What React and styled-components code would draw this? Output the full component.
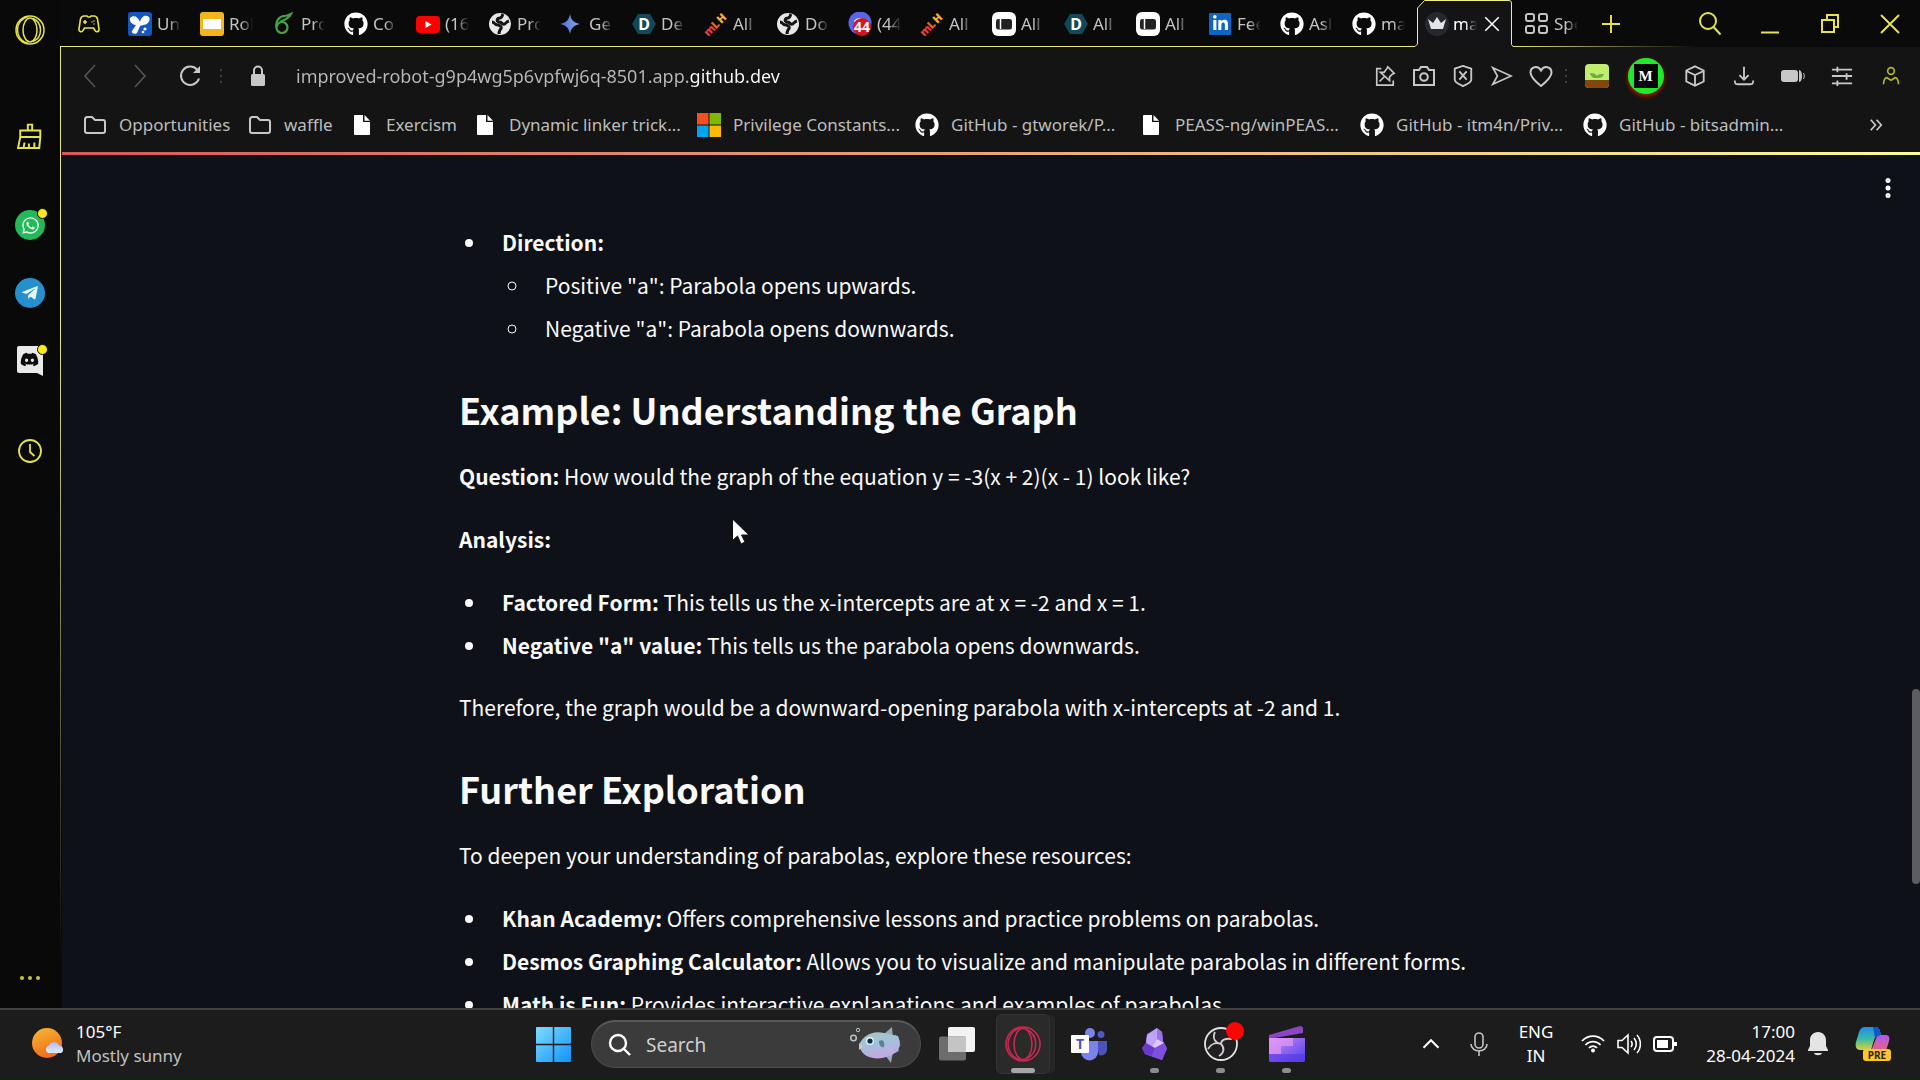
import React, { useState } from "react"
import styled, { createGlobalStyle } from "styled-components"
import {
	FaGithub,
	FaWhatsapp,
	FaTelegramPlane,
	FaDiscord,
	FaLinkedinIn,
} from "react-icons/fa"

const yellow = "#e6e34c"

const GlobalStyle = createGlobalStyle`
	* {
		box-sizing: border-box;
	}
	body {
		margin: 0;
		background: #0a0a0a;
		font-family: "Noto Sans", "Open Sans", sans-serif;
		overflow: hidden;
	}
	button {
		padding: 0;
		border: 0;
		background: none;
		color: inherit;
		font: inherit;
	}
	svg {
		display: block;
		flex: none;
	}
`

const Desktop = styled.div`
	display: flex;
	flex-direction: column;
	height: 100vh;
`
const BrowserWindow = styled.div`
	display: flex;
	flex: 1;
	min-height: 0;
`
const Main = styled.div`
	display: flex;
	flex-direction: column;
	flex: 1;
	min-width: 0;
`

/* SIDEBAR */
const Sidebar = styled.nav`
	display: flex;
	flex-direction: column;
	width: 60px;
	background: #090909;
`
const SideButton = styled.button`
	display: flex;
	align-items: center;
	justify-content: center;
	height: ${(p) => p.$height || 68}px;
	margin-top: ${(p) => p.$top || 0};
	color: ${yellow};
`
const Messenger = styled.span`
	position: relative;
	display: flex;
	align-items: center;
	justify-content: center;
	width: 30px;
	height: 30px;
	border-radius: 50%;
	background: ${(p) => p.$color};
	color: #e8fbf0;
`
const Unread = styled.span`
	position: absolute;
	top: -2px;
	right: -3px;
	width: 11px;
	height: 11px;
	border: 1px solid #090909;
	border-radius: 50%;
	background: #fbe818;
`

/* TABS */
const TabBar = styled.div`
	position: relative;
	display: flex;
	align-items: center;
	height: 47px;
	padding-left: 17px;
	background: #0a0a0a;
	&::after {
		content: "";
		position: absolute;
		left: 0;
		right: 0;
		bottom: 0;
		height: 1px;
		background: linear-gradient(90deg, #e8e58a 78%, #0a0a0a 88%);
	}
`
const GamepadTab = styled.button`
	width: 51px;
	flex: none;
`
const Tab = styled.button`
	display: flex;
	align-items: center;
	gap: 5px;
	width: 72px;
	height: 47px;
	color: #c4c4c4;
`
const TabLabel = styled.span`
	width: 24px;
	overflow: hidden;
	white-space: nowrap;
	text-align: left;
	font-size: 17px;
	line-height: 24px;
	mask-image: linear-gradient(90deg, #000 50%, transparent 100%);
`
const ActiveTab = styled.div`
	position: relative;
	z-index: 1;
	display: flex;
	align-items: center;
	width: 98px;
	height: 47px;
	margin-left: -9px;
	margin-right: 12px;
	padding-left: 10px;
	color: #fff;
`
const TabOutline = styled.svg`
	position: absolute;
	left: 0;
	top: 0;
`
const ActiveTabButton = styled.button`
	position: relative;
	display: flex;
	align-items: center;
	gap: 4px;
	margin-right: 6px;
`
const CloseTab = styled.button`
	position: relative;
`
const NewTab = styled.button`
	margin-left: 5px;
	color: ${yellow};
`
const WindowControls = styled.div`
	display: flex;
	margin-left: auto;
	color: ${yellow};
`
const WindowButton = styled.button`
	display: flex;
	align-items: center;
	justify-content: center;
	width: 60px;
	height: 46px;
	color: inherit;
`

/* TOOLBARS */
const Panel = styled.div`
	display: flex;
	flex-direction: column;
	flex: 1;
	min-height: 0;
	padding-left: 1px;
	background: linear-gradient(#e8e58a, #e8e58a 30%, #0a0a0a 95%);
`
const AddressBar = styled.form`
	display: flex;
	align-items: center;
	height: 58px;
	padding: 0 5px 0 4px;
	background: #141414;
	color: #c8c8c8;
`
const ToolButton = styled.button`
	display: flex;
	align-items: center;
	justify-content: center;
	width: ${(p) => p.$width}px;
	height: 40px;
	color: ${(p) => p.$color || "inherit"};
`
const UrlInput = styled.input`
	flex: 1;
	min-width: 0;
	margin-left: 8px;
	padding: 0;
	border: 0;
	outline: 0;
	font-family: inherit;
	font-size: 18px;
	line-height: 24px;
	background: linear-gradient(90deg, #b9b9b9 ${(p) => p.$split}px, #fff ${(p) => p.$split}px);
	background-clip: text;
	color: transparent;
`
const Medal = styled.span`
	display: flex;
	align-items: center;
	justify-content: center;
	width: 36px;
	height: 36px;
	border-radius: 50%;
	background: #1dea2b;
	box-shadow: 0 2px 4px #c81400;
	span {
		width: 24px;
		height: 24px;
		background: #060606;
		color: #fff;
		font: 700 15px/24px "Liberation Serif", serif;
	}
`
const Bookmarks = styled.div`
	display: flex;
	align-items: center;
	gap: 20px;
	height: 47px;
	padding: 0 37px 7px 22px;
	background: #141414;
`
const Bookmark = styled.a`
	display: flex;
	align-items: center;
	gap: 12px;
	color: #bdbdbd;
	text-decoration: none;
	font-size: 17px;
	line-height: 24px;
`
const BookmarkIcon = styled.span`
	display: flex;
	justify-content: center;
	width: 24px;
	color: #fff;
`
const BookmarkLabel = styled.span`
	width: ${(p) => p.$width}px;
	white-space: nowrap;
`
const MoreBookmarks = styled.button`
	margin-left: auto;
	color: #c8c8c8;
`

/* PAGE */
const Page = styled.main`
	position: relative;
	flex: 1;
	min-height: 0;
	padding-top: 71px;
	padding-right: 8px;
	overflow: hidden;
	border-left: 1px solid #0a0a0a;
	background: #0e1117;
	color: #fafafa;
	font-family: "Noto Sans CJK SC", "Noto Sans", sans-serif;
	font-size: 21px;
	line-height: 38px;
`
const ProgressLine = styled.div`
	position: absolute;
	left: 0;
	right: 0;
	top: 0;
	height: 3px;
	background: linear-gradient(90deg, #d9575c, #e9a67d 50%, #fcfc9a);
`
const PageMenu = styled.button`
	position: absolute;
	right: 20px;
	top: 24px;
	width: 24px;
`
const Scrollbar = styled.div`
	position: absolute;
	right: 0;
	top: 537px;
	width: 8px;
	height: 195px;
	border-radius: 4px;
	background: #5b5d61;
`
const Article = styled.article`
	max-width: 1056px;
	margin: 0 auto;
	h2 {
		margin: 36px 0 22px;
		font-size: 36px;
		line-height: 52px;
		font-weight: 700;
	}
	p {
		margin: 0 0 25px;
	}
	strong {
		font-weight: 700;
	}
`
const List = styled.ul`
	margin: 0 0 24px;
	padding: 0;
	list-style: ${(p) => (p.$nested ? "circle" : "disc")};
	li {
		margin: 0 0 0 29px;
		padding-left: 14px;
	}
	li + li {
		margin-top: 5px;
	}
	& & {
		margin: 5px 0 0;
	}
`
const Cursor = styled.svg`
	position: absolute;
	left: 731px;
	top: 518px;
`

/* TASKBAR */
const Taskbar = styled.footer`
	display: flex;
	height: 72px;
	border-top: 2px solid #404040;
	border-bottom: 2px solid #0f2411;
	background: #1c1c1c;
	color: #fff;
	font-size: 17px;
	line-height: 24px;
`
const Weather = styled.button`
	display: flex;
	flex: 491 1 0;
	align-items: center;
	gap: 11px;
	padding-left: 32px;
	text-align: left;
`
const Muted = styled.span`
	color: #c0c0c0;
`
const Stack = styled.span`
	display: flex;
	flex-direction: column;
`
const StartButton = styled.button`
	display: flex;
	align-items: center;
	justify-content: center;
	width: 60px;
`
const SearchBox = styled.label`
	display: flex;
	align-items: center;
	align-self: center;
	width: 330px;
	height: 48px;
	margin: 0 3px 0 8px;
	padding: 0 18px 0 16px;
	border: 1px solid #4c4c4c;
	border-top: 2px solid #5a5a5a;
	border-radius: 24px;
	background: #3b3b3b;
`
const SearchInput = styled.input`
	flex: 1;
	min-width: 0;
	margin-left: 14px;
	padding: 0;
	border: 0;
	outline: 0;
	background: none;
	color: #fff;
	font-family: inherit;
	font-size: 19px;
	line-height: 24px;
	&::placeholder {
		color: #cfcfcf;
		opacity: 1;
	}
`
const AppButton = styled.button`
	position: relative;
	display: flex;
	align-items: center;
	justify-content: center;
	width: 66px;
`
const ActiveTile = styled.span`
	display: flex;
	align-items: center;
	justify-content: center;
	width: 54px;
	height: 60px;
	border: 1px solid #353535;
	border-radius: 6px;
	background: #2a2a2a;
	box-shadow: 6px 0 0 -1px #262626;
`
const Running = styled.span`
	position: absolute;
	bottom: 5px;
	left: 50%;
	width: ${(p) => (p.$focused ? 24 : 9)}px;
	height: 5px;
	margin-left: ${(p) => (p.$focused ? -12 : -5)}px;
	border-radius: 3px;
	background: ${(p) => (p.$focused ? "#a6a6a6" : "#8c8c8c")};
`
const RecordDot = styled.span`
	position: absolute;
	left: 38px;
	top: 12px;
	width: 18px;
	height: 18px;
	border-radius: 50%;
	background: #fb0505;
`
const Tray = styled.div`
	display: flex;
	flex: 588 1 0;
	align-items: center;
	justify-content: flex-end;
	padding-right: 12px;
`
const TraySlot = styled.button`
	display: flex;
	flex: none;
	flex-direction: column;
	align-items: ${(p) => (p.$end ? "flex-end" : "center")};
	justify-content: center;
	width: ${(p) => p.$width}px;
	height: 60px;
	padding-right: ${(p) => (p.$end ? 3 : 0)}px;
	white-space: nowrap;
`

// shared wrapper for stroked icons
const Line = ({ size = 24, width = 2, children, ...rest }) => (
	<svg
		width={size}
		height={size}
		viewBox="0 0 24 24"
		fill="none"
		stroke="currentColor"
		strokeWidth={width}
		{...rest}
	>
		{children}
	</svg>
)

/* FAVICONS */
const Unstop = () => (
	<svg width="24" height="24" viewBox="0 0 24 24">
		<rect width="24" height="24" rx="3" fill="#1556c0" />
		<path
			d="M2 6c3-3 8-2 10 4 1-5 5-8 9-5 2 3-1 8-6 8l-3 1-3 7c-2 2-6 0-5-2l4-6C4 13 1 9 2 6z"
			fill="#fff"
		/>
		<circle cx="17" cy="17" r="1.6" fill="#fff" />
		<circle cx="15" cy="20" r="1.3" fill="#fff" />
	</svg>
)
const Slides = () => (
	<svg width="24" height="24" viewBox="0 0 24 24">
		<rect width="24" height="24" rx="3" fill="#f4b51c" />
		<rect x="3" y="7" width="18" height="10" fill="#fff" />
	</svg>
)
const Overleaf = () => (
	<svg width="24" height="24" viewBox="0 0 24 24" fill="none" stroke="#46a247" strokeWidth="2.2">
		<circle cx="10" cy="15.5" r="5.5" />
		<path d="M4.500 15C3 9 8 4 12 4c3 0 5-1 7-2-2 4-6 6-11 8" />
	</svg>
)
const Youtube = () => (
	<svg width="24" height="24" viewBox="0 0 24 24">
		<rect y="4" width="24" height="17" rx="4" fill="#f00" />
		<path d="M9.500 9v7l6-3.500z" fill="#fff" />
	</svg>
)
const Globe = () => (
	<svg width="24" height="24" viewBox="0 0 24 24">
		<circle cx="12" cy="12" r="11" fill="#e8e8e8" />
		<path
			d="M4 10c3 0 2 3 6 3 4 1 4 3 2 5-1 2-1 3-1 4M21 9c-4 1-3 4-6 3-2-1-1-2-4-2-3-1-2-4 1-4 2 0 2-2 3-4"
			fill="none"
			stroke="#151515"
			strokeWidth="3"
		/>
	</svg>
)
const Gemini = () => (
	<svg width="24" height="24" viewBox="0 0 24 24">
		<defs>
			<linearGradient id="gem" x1="0" x2="1">
				<stop offset="0" stopColor="#3f6ee0" />
				<stop offset="1" stopColor="#8fa8e6" />
			</linearGradient>
		</defs>
		<path d="M10 2c1 6 4 9 10 10-6 1-9 4-10 10-1-6-4-9-10-10 6-1 9-4 10-10z" fill="url(#gem)" />
	</svg>
)
const Devfolio = () => (
	<svg width="24" height="24" viewBox="0 0 24 24">
		<path d="M6 2h12l6 10-6 10H6L0 12z" fill="#10495a" />
		<text x="12" y="18" textAnchor="middle" fontSize="16" fontWeight="700" fill="#fff">
			D
		</text>
	</svg>
)
const Mlh = () => (
	<svg width="24" height="24" viewBox="0 0 24 24">
		<g fontSize="11" fontWeight="900" textAnchor="middle">
			<text x="6" y="22" fill="#e0403c" transform="rotate(-45 6 19)">m</text>
			<text x="12" y="16" fill="#e0653c" transform="rotate(-45 12 13)">L</text>
			<text x="18" y="10" fill="#f3b632" transform="rotate(-45 18 7)">H</text>
		</g>
	</svg>
)
const Mail = () => (
	<svg width="24" height="24" viewBox="0 0 24 24">
		<circle cx="12" cy="11" r="11.500" fill="#5865e8" />
		<path d="M6 9c3-4 9-4 12 0l-2 3H8z" fill="#fff" />
		<circle cx="14" cy="15" r="9" fill="#d3181d" />
		<text x="14" y="20" textAnchor="middle" fontSize="14" fontWeight="700" fill="#fff">
			44
		</text>
	</svg>
)
const Notebook = () => (
	<svg width="24" height="24" viewBox="0 0 24 24">
		<rect width="24" height="24" rx="6" fill="#fff" />
		<rect x="4" y="7" width="16" height="10.500" rx="2.500" fill="#222" />
		<path d="M8.500 7v10" stroke="#fff" strokeWidth="1.500" />
	</svg>
)
const Linkedin = () => (
	<svg width="24" height="24" viewBox="0 0 24 24">
		<rect x="1" y="1" width="22" height="22" rx="1" fill="#0f66c2" />
		<FaLinkedinIn x="4" y="3" size={17} color="#fff" />
	</svg>
)
const Github = () => <FaGithub size={24} color="#fff" />
const Crown = () => (
	<svg width="24" height="24" viewBox="0 0 24 24">
		<circle cx="12" cy="12" r="12" fill="#252731" />
		<path d="M3 7l5 4 4-6 4 6 5-4-3 10H6z" fill="#e4e4e8" />
	</svg>
)
const SpeedDial = () => (
	<Line>
		<rect x="1" y="2" width="8" height="7" rx="2" />
		<rect x="14" y="2" width="8" height="7" rx="2" />
		<rect x="1" y="14" width="8" height="7" rx="2" />
		<rect x="14" y="14" width="8" height="7" rx="2" />
	</Line>
)
const Gamepad = () => (
	<Line color={yellow} width={1.6}>
		<path d="M7 4h3l1 1h2l1-1h3c2 0 3 1 3.500 3L22 17c.5 3-3 3.500-4 1.500L16.500 16h-9L6 18.500C5 20.500 1.500 20 2 17L3.500 7C4 5 5 4 7 4z" />
		<path d="M8 8v4M6 10h4M14.500 10h1M17 8.500v1M16.500 12h1" />
	</Line>
)

/* BOOKMARK ICONS */
const Folder = () => (
	<Line width={2} color="#c8c8c8">
		<path d="M2 18V6.500C2 5 3 4 4.500 4H9l3 3h8c1.200 0 2 1 2 2v9c0 1.200-1 2-2 2H4c-1.200 0-2-1-2-2z" />
	</Line>
)
const Doc = () => (
	<svg width="16" height="20" viewBox="0 0 16 20" fill="#fff">
		<path d="M1 0h8v7h7v12a1 1 0 0 1-1 1H1a1 1 0 0 1-1-1V1a1 1 0 0 1 1-1z" />
		<path d="M10.500 0L16 5.700h-5.500z" />
	</svg>
)
const Microsoft = () => (
	<svg width="24" height="24" viewBox="0 0 24 24">
		<path d="M0 0h11.500v11.500H0z" fill="#f25022" />
		<path d="M12.500 0H24v11.500H12.500z" fill="#7fba00" />
		<path d="M0 12.500h11.500V24H0z" fill="#00a4ef" />
		<path d="M12.500 12.500H24V24H12.500z" fill="#ffb900" />
	</svg>
)
const Dots = () => (
	<svg width="12" height="16" viewBox="0 0 12 16" fill="#3d3d3d">
		<rect x="5" y="1" width="2" height="2" />
		<rect x="5" y="7" width="2" height="2" />
		<rect x="5" y="13" width="2" height="2" />
	</svg>
)

const tabs = [
	["Un", Unstop],
	["Rol", Slides],
	["Pro", Overleaf],
	["Co", Github],
	["(16", Youtube],
	["Pro", Globe],
	["Ge", Gemini],
	["De", Devfolio],
	["All", Mlh],
	["Do", Globe],
	["(44", Mail],
	["All", Mlh],
	["All", Notebook],
	["All", Devfolio],
	["All", Notebook],
	["Fee", Linkedin],
	["Asl", Github],
	["ma", Github],
]

const bookmarks = [
	["Opportunities", Folder, 109],
	["waffle", Folder, 46],
	["Exercism", Doc, 67],
	["Dynamic linker trick...", Doc, 168],
	["Privilege Constants...", Microsoft, 162],
	["GitHub - gtworek/P...", Github, 168],
	["PEASS-ng/winPEAS...", Doc, 165],
	["GitHub - itm4n/Priv...", Github, 167],
	["GitHub - bitsadmin...", Github, 167],
]

function TabStrip() {
	return (
		<TabBar>
			<GamepadTab aria-label="GX Corner">
				<Gamepad />
			</GamepadTab>
			{tabs.map(([label, Icon], i) => (
				<Tab key={i}>
					<Icon />
					<TabLabel>{label}</TabLabel>
				</Tab>
			))}
			<ActiveTab>
				<TabOutline width="98" height="47" viewBox="0 0 98 47">
					<path d="M0 47V46L2 44V8L9 .5H94Q96.500.5 96.500 3V44L98 46.500V47Z" fill="#141417" />
					<path
						d="M0 46.500L2.500 44V8L9.500 .5H94Q96.500 .5 96.500 3V44.500L98 46.500"
						fill="none"
						stroke="#f0ed8c"
					/>
				</TabOutline>
				<ActiveTabButton>
					<Crown />
					<TabLabel>ma</TabLabel>
				</ActiveTabButton>
				<CloseTab aria-label="Close tab">
					<Line size={18} width={2}>
						<path d="M3 3l18 18M21 3L3 21" />
					</Line>
				</CloseTab>
			</ActiveTab>
			<Tab>
				<SpeedDial />
				<TabLabel>Spe</TabLabel>
			</Tab>
			<NewTab aria-label="New tab">
				<Line size={18} width={2.6}>
					<path d="M12 0v24M0 12h24" />
				</Line>
			</NewTab>
			<WindowControls>
				<WindowButton aria-label="Search tabs">
					<Line width={2}>
						<circle cx="10" cy="9" r="8" />
						<path d="M15.500 15l7 7.500" />
					</Line>
				</WindowButton>
				<WindowButton aria-label="Minimise">
					<Line>
						<path d="M3 20.500h18" />
					</Line>
				</WindowButton>
				<WindowButton aria-label="Restore">
					<Line width={2}>
						<path d="M4 8h12v12H4zM9 8V3h11v12h-4" />
					</Line>
				</WindowButton>
				<WindowButton aria-label="Close">
					<Line>
						<path d="M3 3l18 18M21 3L3 21" />
					</Line>
				</WindowButton>
			</WindowControls>
		</TabBar>
	)
}

function Toolbar() {
	const [url, setUrl] = useState("improved-robot-g9p4wg5p6vpfwj6q-8501.app.github.dev")
	return (
		<AddressBar onSubmit={(e) => e.preventDefault()}>
			<ToolButton type="button" $width={50} $color="#555" aria-label="Back">
				<Line width={1.6}>
					<path d="M17 1L7 12l10 11" />
				</Line>
			</ToolButton>
			<ToolButton type="button" $width={50} $color="#555" aria-label="Forward">
				<Line width={1.6}>
					<path d="M7 1l10 11L7 23" />
				</Line>
			</ToolButton>
			<ToolButton type="button" $width={50} aria-label="Reload">
				<Line width={2}>
					<path d="M21 14.500A9.200 9.200 0 1 1 19 5.500" />
					<path d="M22 2v7h-7z" fill="currentColor" stroke="none" />
				</Line>
			</ToolButton>
			<Dots />
			<ToolButton type="button" $width={61} aria-label="Site information">
				<svg width="16" height="22" viewBox="0 0 16 22" fill="#c8c8c8">
					<rect x="1" y="9" width="14" height="12" rx="1.500" />
					<path d="M4 9V5.500a4 4 0 0 1 8 0V9" fill="none" stroke="#c8c8c8" strokeWidth="2" />
				</svg>
			</ToolButton>
			<UrlInput
				aria-label="Address"
				spellCheck="false"
				$split={393}
				value={url}
				onChange={(e) => setUrl(e.target.value)}
			/>
			<ToolButton type="button" $width={39} aria-label="Pin page">
				<Line size={22} width={1.8}>
					<path d="M8 4H3v18h18v-5" />
					<path d="M15 2l7 7-2 1-3 3v4L7 8h4l3-4zM12 12l-6 6" />
				</Line>
			</ToolButton>
			<ToolButton type="button" $width={39} aria-label="Snapshot">
				<Line>
					<path d="M2 6h5l2-3h6l2 3h5v15H2z" />
					<circle cx="12" cy="13" r="3.800" />
				</Line>
			</ToolButton>
			<ToolButton type="button" $width={39} aria-label="Ad blocker">
				<Line size={22} width={2}>
					<path d="M3 4l9-3 9 3v12c0 3-5 5-9 7-4-2-9-4-9-7z" />
					<path d="M8 7l8 9M16 7l-8 9" />
				</Line>
			</ToolButton>
			<ToolButton type="button" $width={39} aria-label="Send to Flow">
				<Line size={22} width={1.8}>
					<path d="M2 3l20 9-20 9 5-9z" />
				</Line>
			</ToolButton>
			<ToolButton type="button" $width={39} aria-label="Save to favourites">
				<Line width={2}>
					<path d="M12 22C7 18 1.500 13.500 1.500 8.500 1.500 2.500 9 1 12 6.500 15 1 22.500 2.500 22.500 8.500c0 5-5.500 9.500-10.500 13.500z" />
				</Line>
			</ToolButton>
			<Dots />
			<ToolButton type="button" $width={49} aria-label="Plant extension">
				<svg width="24" height="24" viewBox="0 0 24 24">
					<rect width="24" height="24" rx="4" fill="#c2ee70" />
					<path d="M0 16h24v4a4 4 0 0 1-4 4H4a4 4 0 0 1-4-4z" fill="#82470f" />
					<path d="M5 9c4 0 6 1 7 3 1-2 3-2 7-2-1 3-3 4-6 4h-2c-4 0-5-2-6-5z" fill="#6cae3c" />
				</svg>
			</ToolButton>
			<ToolButton type="button" $width={49} aria-label="M extension">
				<Medal>
					<span>M</span>
				</Medal>
			</ToolButton>
			<ToolButton type="button" $width={49} aria-label="Extensions">
				<Line size={22} width={2}>
					<path d="M12 1.500l9.500 4.500v12L12 22.500 2.500 18V6zM2.500 6.500L12 11l9.500-4.500M12 11v11" />
				</Line>
			</ToolButton>
			<ToolButton type="button" $width={49} aria-label="Downloads">
				<Line size={22} width={2}>
					<path d="M12 2v13M7 11l5 5 5-5M2 17c0 4 1 4 4 4h12c3 0 4 0 4-4" />
				</Line>
			</ToolButton>
			<ToolButton type="button" $width={49} aria-label="Battery saver">
				<svg width="24" height="14" viewBox="0 0 24 14" fill="#c8c8c8">
					<rect y="1" width="17" height="12" rx="3" />
					<path d="M18 1c4 0 4 12 0 12z" />
					<path d="M22.500 4c1 2 1 4 0 6" stroke="#c8c8c8" fill="none" />
				</svg>
			</ToolButton>
			<ToolButton type="button" $width={49} aria-label="Easy setup">
				<Line size={22} width={2}>
					<path d="M1 5h22M1 12h22M1 20h22M7 2v6M17 9v7M7 17v6" />
				</Line>
			</ToolButton>
			<ToolButton type="button" $width={49} $color="#b5b32a" aria-label="Profile">
				<Line size={20}>
					<circle cx="12" cy="6" r="4" />
					<path d="M3 22c0-5 2-8 4-8l5 3 5-3c2 0 4 3 4 8" />
				</Line>
			</ToolButton>
		</AddressBar>
	)
}

function BookmarkBar() {
	return (
		<Bookmarks>
			{bookmarks.map(([label, Icon, width]) => (
				<Bookmark href="#" key={label}>
					<BookmarkIcon>
						<Icon />
					</BookmarkIcon>
					<BookmarkLabel $width={width}>{label}</BookmarkLabel>
				</Bookmark>
			))}
			<MoreBookmarks aria-label="More bookmarks">
				<Line size={14} width={3}>
					<path d="M3 3l8 9-8 9M13 3l8 9-8 9" />
				</Line>
			</MoreBookmarks>
		</Bookmarks>
	)
}

function Content() {
	return (
		<Page>
			<ProgressLine />
			<PageMenu aria-label="Main menu">
				<svg width="24" height="24" viewBox="0 0 24 24" fill="#fff">
					<circle cx="12" cy="4.500" r="2.500" />
					<circle cx="12" cy="12" r="2.500" />
					<circle cx="12" cy="19.500" r="2.500" />
				</svg>
			</PageMenu>
			<Article>
				<List>
					<li>
						<strong>Direction:</strong>
						<List $nested>
							<li>Positive "a": Parabola opens upwards.</li>
							<li>Negative "a": Parabola opens downwards.</li>
						</List>
					</li>
				</List>
				<h2>Example: Understanding the Graph</h2>
				<p>
					<strong>Question:</strong> How would the graph of the equation y = -3(x + 2)(x - 1) look
					like?
				</p>
				<p>
					<strong>Analysis:</strong>
				</p>
				<List>
					<li>
						<strong>Factored Form:</strong> This tells us the x-intercepts are at x = -2 and x = 1.
					</li>
					<li>
						<strong>Negative "a" value:</strong> This tells us the parabola opens downwards.
					</li>
				</List>
				<p>
					Therefore, the graph would be a downward-opening parabola with x-intercepts at -2 and 1.
				</p>
				<h2>Further Exploration</h2>
				<p>To deepen your understanding of parabolas, explore these resources:</p>
				<List>
					<li>
						<strong>Khan Academy:</strong> Offers comprehensive lessons and practice problems on
						parabolas.
					</li>
					<li>
						<strong>Desmos Graphing Calculator:</strong> Allows you to visualize and manipulate
						parabolas in different forms.
					</li>
					<li>
						<strong>Math is Fun:</strong> Provides interactive explanations and examples of
						parabolas.
					</li>
				</List>
			</Article>
			<Scrollbar />
		</Page>
	)
}

function SideNav() {
	return (
		<Sidebar>
			<SideButton $height={60} aria-label="Opera menu">
				<svg width="30" height="30" viewBox="0 0 30 30" fill="none" stroke={yellow} strokeWidth="1.500">
					<circle cx="15" cy="15" r="14" />
					<ellipse cx="15" cy="15" rx="7" ry="12" />
					<path d="M13 1.500C-1 6-1 24 13 28.500M18 3.500c10 4 10 19 0 23" />
				</svg>
			</SideButton>
			<SideButton $top="42px" aria-label="Cleaner">
				<Line size={26} width={1.8}>
					<path d="M10 7V1.500h4V7M3 7h18.500v6H3zM3 13L1 23h19.500l1-10M6 23l1-5M11 23v-4M16 23v-5" />
				</Line>
			</SideButton>
			<SideButton $top="21px" aria-label="WhatsApp">
				<Messenger $color="#25b858">
					<FaWhatsapp size={19} />
					<Unread />
				</Messenger>
			</SideButton>
			<SideButton aria-label="Telegram">
				<Messenger $color="#2590cc">
					<FaTelegramPlane size={18} />
				</Messenger>
			</SideButton>
			<SideButton aria-label="Discord">
				<Messenger $color="transparent">
					<svg width="28" height="30" viewBox="0 0 28 30">
						<path d="M3 0h22a2 2 0 0 1 2 2v28l-6-3H3a2 2 0 0 1-2-2V2a2 2 0 0 1 2-2z" fill="#e9e9e9" />
						<FaDiscord x="4" y="4" size={19} color="#0c0c0c" />
					</svg>
					<Unread />
				</Messenger>
			</SideButton>
			<SideButton $top="22px" aria-label="History">
				<Line width={1.8}>
					<circle cx="12" cy="12" r="11" />
					<path d="M12 5v8l4.500 4" />
				</Line>
			</SideButton>
			<SideButton $top="auto" $height={60} aria-label="Sidebar setup">
				<svg width="22" height="6" viewBox="0 0 22 6" fill="#c5c33a">
					<circle cx="3" cy="3" r="2" />
					<circle cx="11" cy="3" r="2" />
					<circle cx="19" cy="3" r="2" />
				</svg>
			</SideButton>
		</Sidebar>
	)
}

/* TASKBAR ICONS */
const Sun = () => (
	<svg width="33" height="32" viewBox="0 0 33 32">
		<defs>
			<linearGradient id="sun" x1="0" y1="0" x2=".4" y2="1">
				<stop offset="0" stopColor="#f9b934" />
				<stop offset="1" stopColor="#ee6f1b" />
			</linearGradient>
			<linearGradient id="cloud" x1="0" y1="0" x2="0" y2="1">
				<stop offset="0" stopColor="#a9c2f5" />
				<stop offset="1" stopColor="#e3e8f6" />
			</linearGradient>
		</defs>
		<circle cx="15" cy="15" r="15" fill="url(#sun)" />
		<path d="M16 25a4 4 0 0 1 1-7.500 5.500 5.500 0 0 1 10 0A4 4 0 0 1 29 25z" fill="url(#cloud)" />
	</svg>
)
const WindowsLogo = () => (
	<svg width="35" height="35" viewBox="0 0 35 35">
		<defs>
			<linearGradient id="win" gradientUnits="userSpaceOnUse" x1="0" y1="0" x2="35" y2="35">
				<stop offset="0" stopColor="#7fdcff" />
				<stop offset="1" stopColor="#0f93fb" />
			</linearGradient>
		</defs>
		<path
			d="M1 0h15.800v16.800H0V1a1 1 0 0 1 1-1zM18.200 0H34a1 1 0 0 1 1 1v15.800H18.200zM0 18.200h16.800V35H1a1 1 0 0 1-1-1zM18.200 18.200H35V34a1 1 0 0 1-1 1H18.200z"
			fill="url(#win)"
		/>
	</svg>
)
const Fish = () => (
	<svg width="52" height="38" viewBox="0 0 52 38">
		<defs>
			<linearGradient id="fish" x1="0" y1="0" x2=".3" y2="1">
				<stop offset="0" stopColor="#a8c8b9" />
				<stop offset=".55" stopColor="#a4bfe0" />
				<stop offset="1" stopColor="#c4a8e0" />
			</linearGradient>
		</defs>
		<path d="M34 8l8-7 1 12zM35 29l6 8 2-11z" fill="#93aabd" />
		<path d="M46 10c2 2 2 3 4 5-1 2 1 3 0 5s-2 2-1 5l-4 2V8z" fill="#8d9ddd" />
		<path d="M9 19c4-10 14-15 25-12l14 3c2 4 2 9 0 14-8 10-33 13-38-2z" fill="url(#fish)" />
		<path d="M9 17l4 4-4 3z" fill="#d8c4bb" />
		<circle cx="20" cy="15" r="4" fill="#e9f3f4" />
		<circle cx="20" cy="15" r="2.600" fill="#0e2c4d" />
		<path d="M29 15c4-2 6 1 5 6-3 1-5-2-5-6z" fill="#5c8291" />
		<circle cx="3.500" cy="12" r="2.800" fill="none" stroke="#b9c4c8" strokeWidth="1.500" />
		<circle cx="8" cy="4" r="1.700" fill="none" stroke="#b9c4c8" />
	</svg>
)
const TaskView = () => (
	<svg width="36" height="34" viewBox="0 0 36 34">
		<rect x="9" width="27" height="25" rx="2" fill="#f3f3f3" />
		<rect y="9.500" width="27" height="24" rx="2" fill="#6c6c6c" />
		<path d="M9 9.500h18V25H9z" fill="#c4c4c4" />
	</svg>
)
const OperaGx = () => (
	<svg width="36" height="36" viewBox="0 0 36 36" fill="none" stroke="#c92850" strokeWidth="1.600">
		<circle cx="18" cy="18" r="17" />
		<ellipse cx="18" cy="18" rx="9" ry="15.500" />
		<path d="M15 2C-1 7-1 29 15 34M21 3c13 6 13 24 0 30" />
	</svg>
)
const Teams = () => (
	<svg width="36" height="34" viewBox="0 0 36 34">
		<circle cx="30" cy="7.500" r="3.500" fill="#5059c9" />
		<path d="M25 14h11v9a6 6 0 0 1-8 5z" fill="#4b53bc" />
		<circle cx="19" cy="6" r="5" fill="#7b83eb" />
		<path d="M10 14h17v11a8.500 8.500 0 0 1-17 0z" fill="#7b83eb" />
		<rect y="8" width="18" height="18" rx="1" fill="#fff" />
		<text x="9" y="22" textAnchor="middle" fontSize="14" fontWeight="700" fill="#4b53bc">
			T
		</text>
	</svg>
)
const Obsidian = () => (
	<svg width="26" height="34" viewBox="0 0 26 34">
		<path d="M15 1l5 4 1 9 4 7-5 12-9-3-8-3-3-6 4-5 1-9z" fill="#8b5fe8" />
		<path d="M15 1L5 8 4 16l6 4 5-8z" fill="#c0a3fa" />
		<path d="M15 1l5 4 1 10-6-3z" fill="#9873ee" />
		<path d="M15 12l-5 8 3 1 9-5z" fill="#dccdfd" />
		<path d="M4 16l-4 5 3 6 7 2 3-8z" fill="#6a38cc" />
		<path d="M13 21l-3 8 10 4 5-11-3-6z" fill="#7c4fe0" />
	</svg>
)
const Obs = () => (
	<svg width="36" height="36" viewBox="0 0 36 36">
		<circle cx="18" cy="18" r="16" fill="#211f22" stroke="#e4e4e4" strokeWidth="1.800" />
		<path
			d="M12 6c-3 6 0 11 6 12M29 13c-7-1-11 1-11 5M18 18c4 4 3 9-2 12M18 18c-5-2-10 0-13 5"
			fill="none"
			stroke="#cfcfcf"
			strokeWidth="1.800"
		/>
	</svg>
)
const Clipchamp = () => (
	<svg width="36" height="36" viewBox="0 0 36 36">
		<defs>
			<linearGradient id="clip" x1="0" y1="0" x2="1" y2="1">
				<stop offset="0" stopColor="#d58df0" />
				<stop offset="1" stopColor="#4a3ef0" />
			</linearGradient>
		</defs>
		<path d="M0 9L31 0c2 0 3 1 3 3v4L0 13z" fill="#8a46c4" />
		<path d="M0 12h36v22a2 2 0 0 1-2 2H2a2 2 0 0 1-2-2z" fill="url(#clip)" />
		<path d="M0 12h24v8H12v8H0z" fill="#e39af5" opacity=".7" />
		<path d="M0 28h36v6a2 2 0 0 1-2 2H2a2 2 0 0 1-2-2z" fill="#5a35e8" opacity=".6" />
	</svg>
)
const Copilot = () => (
	<svg width="36" height="36" viewBox="0 0 36 36">
		<defs>
			<linearGradient id="cpa" x1="0" y1="0" x2="0" y2="1">
				<stop offset="0" stopColor="#1f8df0" />
				<stop offset=".5" stopColor="#39b8a8" />
				<stop offset="1" stopColor="#d8d33a" />
			</linearGradient>
			<linearGradient id="cpb" x1="0" y1="0" x2="0" y2="1">
				<stop offset="0" stopColor="#a95cf0" />
				<stop offset="1" stopColor="#f0607c" />
			</linearGradient>
		</defs>
		<path d="M25 9h6c3 0 4 3 3 6l-3 10H16l4-10c1-4 3-6 5-6z" fill="url(#cpb)" />
		<path d="M10 1h11c3 0 4 3 5 8-4 0-6 2-7 5l-3 10H5c-4 0-5-4-4-8L4 6c1-3 3-5 6-5z" fill="url(#cpa)" />
		<path d="M18 1h3c3 0 4 3 5 8-3 0-5 1-6 3z" fill="#1356c8" />
		<rect x="8" y="23" width="28" height="12" rx="3" fill="#fcc52c" />
		<text x="22" y="33" textAnchor="middle" fontSize="10" fontWeight="700" fill="#2a1d00">
			PRE
		</text>
	</svg>
)

function TaskbarRow() {
	return (
		<Taskbar>
			<Weather>
				<Sun />
				<Stack>
					<span>105°F</span>
					<Muted>Mostly sunny</Muted>
				</Stack>
			</Weather>
			<StartButton aria-label="Start">
				<WindowsLogo />
			</StartButton>
			<SearchBox>
				<Line size={24} width={2.4}>
					<circle cx="10" cy="10" r="8" />
					<path d="M16 16l6 6" />
				</Line>
				<SearchInput placeholder="Search" aria-label="Search" />
				<Fish />
			</SearchBox>
			<AppButton aria-label="Task view">
				<TaskView />
			</AppButton>
			<AppButton aria-label="Opera GX">
				<ActiveTile>
					<OperaGx />
				</ActiveTile>
				<Running $focused />
			</AppButton>
			<AppButton aria-label="Teams">
				<Teams />
			</AppButton>
			<AppButton aria-label="Obsidian">
				<Obsidian />
				<Running />
			</AppButton>
			<AppButton aria-label="OBS Studio">
				<Obs />
				<RecordDot />
				<Running />
			</AppButton>
			<AppButton aria-label="Clipchamp">
				<Clipchamp />
				<Running />
			</AppButton>
			<Tray>
				<TraySlot $width={60} aria-label="Show hidden icons">
					<Line size={18} width={2.6}>
						<path d="M2 17L12 7l10 10" />
					</Line>
				</TraySlot>
				<TraySlot $width={36} aria-label="Microphone">
					<Line width={1.6} color="#c4c4c4">
						<rect x="8" y="1" width="8" height="15" rx="4" />
						<path d="M4 12c0 9 16 9 16 0M12 19v5" />
					</Line>
				</TraySlot>
				<TraySlot $width={78}>
					<span>ENG</span>
					<span>IN</span>
				</TraySlot>
				<TraySlot $width={36} aria-label="Wi-Fi">
					<Line width={1.8}>
						<path d="M1 9c6-6.500 16-6.500 22 0M4.500 13c4-4.500 11-4.500 15 0M8 16c2-2.500 6-2.500 8 0" />
						<circle cx="12" cy="18.500" r="2" fill="currentColor" stroke="none" />
					</Line>
				</TraySlot>
				<TraySlot $width={36} aria-label="Volume">
					<Line width={1.6}>
						<path d="M1 8.500h4L11 3v18l-6-5.500H1zM14 9c1.500 2 1.500 4 0 6M17 6c3 3.500 3 8.500 0 12M20 3c4.500 5 4.500 13 0 18" />
					</Line>
				</TraySlot>
				<TraySlot $width={36} aria-label="Battery">
					<Line width={2}>
						<rect x="1" y="5" width="19" height="14" rx="3" />
						<rect x="4" y="8" width="11" height="8" fill="currentColor" stroke="none" />
						<path d="M22.500 10v4" strokeWidth="3" />
					</Line>
				</TraySlot>
				<TraySlot $width={115} $end>
					<span>17:00</span>
					<span>28-04-2024</span>
				</TraySlot>
				<TraySlot $width={40} aria-label="Notifications">
					<svg width="22" height="24" viewBox="0 0 22 24" fill="#e4e4e4">
						<path d="M11 0c5 0 8 4 8 8v6l2 4v1H1v-1l2-4V8c0-4 3-8 8-8zM7 21h8c-1 3-7 3-8 0z" />
					</svg>
				</TraySlot>
				<TraySlot $width={70} aria-label="Copilot">
					<Copilot />
				</TraySlot>
			</Tray>
		</Taskbar>
	)
}

export default function App() {
	return (
		<Desktop>
			<GlobalStyle />
			<BrowserWindow>
				<SideNav />
				<Main>
					<TabStrip />
					<Panel>
						<Toolbar />
						<BookmarkBar />
						<Content />
					</Panel>
				</Main>
			</BrowserWindow>
			<TaskbarRow />
			<Cursor width="20" height="27" viewBox="0 0 20 27">
				<path
					d="M1.500 1v21.500l5-4.500 3.500 8 4-2-3.500-7H18z"
					fill="#fff"
					stroke="#111"
					strokeWidth="1"
				/>
			</Cursor>
		</Desktop>
	)
}
